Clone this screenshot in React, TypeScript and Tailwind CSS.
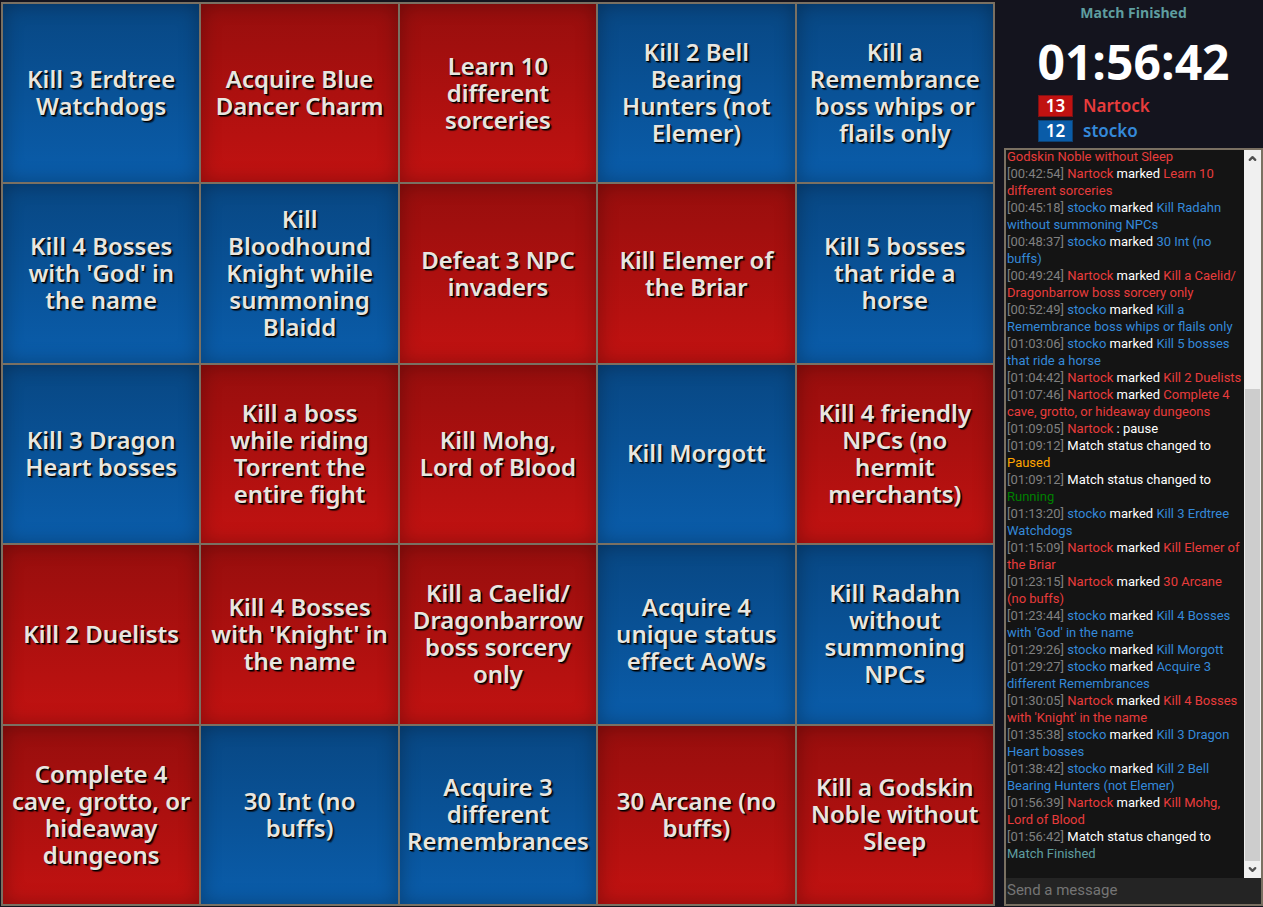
import { ChevronDown, ChevronUp } from "lucide-react";

type Team = "red" | "blue";

const board: { team: Team; goal: string }[] = [
  { team: "blue", goal: "Kill 3 Erdtree\nWatchdogs" },
  { team: "red", goal: "Acquire Blue\nDancer Charm" },
  { team: "red", goal: "Learn 10\ndifferent\nsorceries" },
  { team: "blue", goal: "Kill 2 Bell\nBearing\nHunters (not\nElemer)" },
  { team: "blue", goal: "Kill a\nRemembrance\nboss whips or\nflails only" },
  { team: "blue", goal: "Kill 4 Bosses\nwith 'God' in\nthe name" },
  { team: "blue", goal: "Kill\nBloodhound\nKnight while\nsummoning\nBlaidd" },
  { team: "red", goal: "Defeat 3 NPC\ninvaders" },
  { team: "red", goal: "Kill Elemer of\nthe Briar" },
  { team: "blue", goal: "Kill 5 bosses\nthat ride a\nhorse" },
  { team: "blue", goal: "Kill 3 Dragon\nHeart bosses" },
  { team: "red", goal: "Kill a boss\nwhile riding\nTorrent the\nentire fight" },
  { team: "red", goal: "Kill Mohg,\nLord of Blood" },
  { team: "blue", goal: "Kill Morgott" },
  { team: "red", goal: "Kill 4 friendly\nNPCs (no\nhermit\nmerchants)" },
  { team: "red", goal: "Kill 2 Duelists" },
  { team: "red", goal: "Kill 4 Bosses\nwith 'Knight' in\nthe name" },
  { team: "red", goal: "Kill a Caelid/\nDragonbarrow\nboss sorcery\nonly" },
  { team: "blue", goal: "Acquire 4\nunique status\neffect AoWs" },
  { team: "blue", goal: "Kill Radahn\nwithout\nsummoning\nNPCs" },
  { team: "red", goal: "Complete 4\ncave, grotto, or\nhideaway\ndungeons" },
  { team: "blue", goal: "30 Int (no\nbuffs)" },
  { team: "blue", goal: "Acquire 3\ndifferent\nRemembrances" },
  { team: "red", goal: "30 Arcane (no\nbuffs)" },
  { team: "red", goal: "Kill a Godskin\nNoble without\nSleep" },
];

type Entry =
  | { kind: "mark"; time: string; team: Team; goal: string }
  | { kind: "chat"; time: string; team: Team; text: string }
  | { kind: "status"; time: string; status: string; tone: string };

const log: Entry[] = [
  { kind: "mark", time: "00:42:54", team: "red", goal: "Learn 10\ndifferent sorceries" },
  { kind: "mark", time: "00:45:18", team: "blue", goal: "Kill Radahn\nwithout summoning NPCs" },
  { kind: "mark", time: "00:48:37", team: "blue", goal: "30 Int (no\nbuffs)" },
  { kind: "mark", time: "00:49:24", team: "red", goal: "Kill a Caelid/\nDragonbarrow boss sorcery only" },
  { kind: "mark", time: "00:52:49", team: "blue", goal: "Kill a\nRemembrance boss whips or flails only" },
  { kind: "mark", time: "01:03:06", team: "blue", goal: "Kill 5 bosses\nthat ride a horse" },
  { kind: "mark", time: "01:04:42", team: "red", goal: "Kill 2 Duelists" },
  { kind: "mark", time: "01:07:46", team: "red", goal: "Complete 4\ncave, grotto, or hideaway dungeons" },
  { kind: "chat", time: "01:09:05", team: "red", text: "pause" },
  { kind: "status", time: "01:09:12", status: "Paused", tone: "text-[#ffa500]" },
  { kind: "status", time: "01:09:12", status: "Running", tone: "text-[#008000]" },
  { kind: "mark", time: "01:13:20", team: "blue", goal: "Kill 3 Erdtree\nWatchdogs" },
  { kind: "mark", time: "01:15:09", team: "red", goal: "Kill Elemer of\nthe Briar" },
  { kind: "mark", time: "01:23:15", team: "red", goal: "30 Arcane\n(no buffs)" },
  { kind: "mark", time: "01:23:44", team: "blue", goal: "Kill 4 Bosses\nwith 'God' in the name" },
  { kind: "mark", time: "01:29:26", team: "blue", goal: "Kill Morgott" },
  { kind: "mark", time: "01:29:27", team: "blue", goal: "Acquire 3\ndifferent Remembrances" },
  { kind: "mark", time: "01:30:05", team: "red", goal: "Kill 4 Bosses\nwith 'Knight' in the name" },
  { kind: "mark", time: "01:35:38", team: "blue", goal: "Kill 3 Dragon\nHeart bosses" },
  { kind: "mark", time: "01:38:42", team: "blue", goal: "Kill 2 Bell\nBearing Hunters (not Elemer)" },
  { kind: "mark", time: "01:56:39", team: "red", goal: "Kill Mohg,\nLord of Blood" },
  { kind: "status", time: "01:56:42", status: "Match Finished", tone: "text-[#5f9ea0]" },
];

const names: Record<Team, string> = { red: "Nartock", blue: "stocko" };

const textTone: Record<Team, string> = {
  red: "text-[#e83c3c]",
  blue: "text-[#3489d9]",
};

const cellTone: Record<Team, string> = {
  red: "bg-linear-to-b from-[#970e0d] to-[#c21211]",
  blue: "bg-linear-to-b from-[#084783] to-[#0a5dab]",
};

const scoreTone: Record<Team, string> = {
  red: "bg-[#c01211] border-[#7d1114]",
  blue: "bg-[#0a5ca8] border-[#0d4172]",
};

function Cell({ team, goal }: { team: Team; goal: string }) {
  return (
    <button
      type="button"
      className={`flex min-w-0 items-center justify-center whitespace-pre pb-0.5 text-center font-['Noto_Sans',sans-serif] text-[24px] leading-[27px] font-semibold text-[#e8e6e0] shadow-[inset_0_0_20px_rgba(0,0,0,0.3)] [text-shadow:1px_1px_0_#000,2px_2px_1px_rgba(0,0,0,0.6)] ${cellTone[team]}`}
    >
      {goal}
    </button>
  );
}

function Score({ team, count }: { team: Team; count: number }) {
  return (
    <div className="flex h-[22px] items-center gap-2.5 font-['Noto_Sans',sans-serif] text-[17px] leading-5 font-semibold">
      <span className={`flex h-full w-[35px] items-center justify-center border text-white ${scoreTone[team]}`}>
        {count}
      </span>
      <span className={textTone[team]}>{names[team]}</span>
    </div>
  );
}

function LogLine({ entry }: { entry: Entry }) {
  return (
    <p>
      <span className="text-[#808080]">[{entry.time}]</span>{" "}
      {entry.kind === "status" ? (
        <>
          Match status changed to{"\n"}
          <span className={entry.tone}>{entry.status}</span>
        </>
      ) : (
        <>
          <span className={textTone[entry.team]}>{names[entry.team]}</span>{" "}
          {entry.kind === "chat" ? (
            `: ${entry.text}`
          ) : (
            <>
              marked <span className={textTone[entry.team]}>{entry.goal}</span>
            </>
          )}
        </>
      )}
    </p>
  );
}

function Scrollbar() {
  return (
    <div className="flex w-[17px] shrink-0 flex-col bg-[#f0f0f0] text-[#505050]">
      <button type="button" aria-label="Scroll up" className="flex h-[17px] items-center justify-center">
        <ChevronUp size={11} strokeWidth={5} />
      </button>
      <div className="flex min-h-0 flex-1 flex-col justify-end px-px">
        <div className="h-[68%] bg-[#cdcdcd]" />
      </div>
      <button type="button" aria-label="Scroll down" className="flex h-[17px] items-center justify-center">
        <ChevronDown size={11} strokeWidth={5} />
      </button>
    </div>
  );
}

export default function App() {
  return (
    <div className="flex h-screen gap-[9px] bg-[#14141e] pt-0.5 pb-px pl-px font-['Open_Sans',sans-serif]">
      <main className="grid min-w-0 flex-1 grid-cols-5 grid-rows-5 gap-0.5 border-2 border-[#7a7062] bg-[#7a7062]">
        {board.map((cell) => (
          <Cell key={cell.goal} {...cell} />
        ))}
      </main>

      <aside className="flex w-[259px] shrink-0 flex-col">
        <h1 className="pt-px text-center text-[14px] leading-5 font-bold text-[#5f9ea0]">Match Finished</h1>
        <div className="pt-2 text-center text-[48px] leading-[62px] font-bold text-white">01:56:42</div>
        <div className="flex flex-col gap-[3px] pt-0.5 pb-1.5 pl-[34px]">
          <Score team="red" count={13} />
          <Score team="blue" count={12} />
        </div>

        <section className="flex min-h-0 flex-1 flex-col border-2 border-[#7a7062] bg-[#141414]">
          <div className="flex min-h-0 flex-1">
            <div className="flex min-w-0 flex-1 flex-col justify-end overflow-hidden pb-4 pl-px font-[Roboto,sans-serif] text-[13px] leading-[17px] whitespace-pre text-white">
              <p className={textTone.red}>Godskin Noble without Sleep</p>
              {log.map((entry, i) => (
                <LogLine key={i} entry={entry} />
              ))}
            </div>
            <Scrollbar />
          </div>
          <input
            type="text"
            aria-label="Send a message"
            placeholder="Send a message"
            className="h-[26px] w-full bg-[#242424] px-px pb-0.5 font-[Roboto,sans-serif] text-[15px] text-white outline-none placeholder:text-[#757575]"
          />
        </section>
      </aside>
    </div>
  );
}
